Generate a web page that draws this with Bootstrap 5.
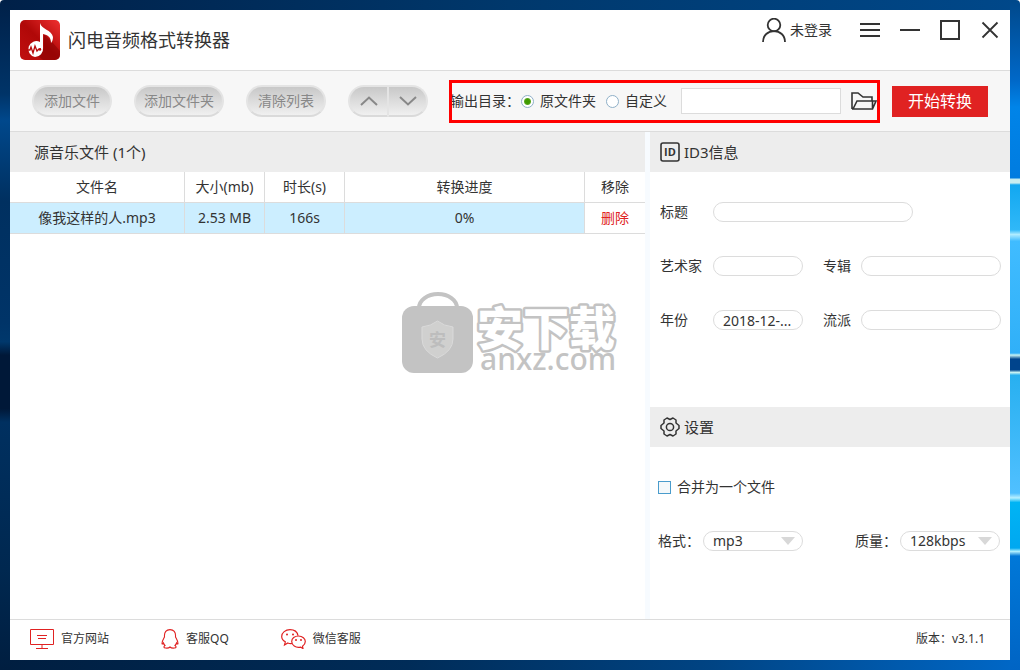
<!DOCTYPE html>
<html lang="zh-CN">
<head>
<meta charset="utf-8">
<meta name="viewport" content="width=device-width, initial-scale=1">
<title>闪电音频格式转换器</title>
<link href="https://cdn.jsdelivr.net/npm/bootstrap@5.3.0/dist/css/bootstrap.min.css" rel="stylesheet">
<style>
  body { font: 14px/20px "Noto Sans", "Noto Sans CJK SC", sans-serif; color: #333; background: #fff; }
  .desktop {
    min-height: 100vh; padding: 10px; border-radius: 4px 4px 0 0;
    background:
      linear-gradient(#00488a 0, #0068c8 12%, #0084e8 16%, #007ce0 26.5%, #c8eef0 26.8%, #c8eef0 27.3%, #12a8f0 27.6%, #30b8f8 34.3%, #b0ecff 35%, #40bcff 36%, #30b0f8 52.7%, #c8f4f4 53%, #00448c 53.6%, #00448c 55.2%, #c8f4f4 55.6%, #28b0f0 56%, #50c0ff 73.6%, #b8f0ff 74.3%, #00b4f4 75%, #00a8f0 81.8%, #b0f0ff 82.3%, #0078d8 83%, #0064c4 100%) right / 10px 100% no-repeat,
      linear-gradient(#002048 0, #003468 14%, #00488c 18%, #003060 30%, #003468 48%, #00386c 51%, #001838 53%, #001838 61%, #003060 63%, #002850 85%, #001e40 100%) left / 10px 100% no-repeat,
      linear-gradient(90deg, #002048, #00386c 50%, #00488a) top / 100% 10px no-repeat,
      linear-gradient(90deg, #001e40, #002c58 40%, #004484 70%, #0068c8) bottom / 100% 10px no-repeat;
  }
  .app { background: #fff; min-height: calc(100vh - 20px); }
  .titlebar { height: 61px; padding: 10px; border-bottom: 1px solid #dcdcdc; }
  .app-name { font-size: 18px; line-height: 24px; margin: 0 0 0 8px; font-weight: 400; }
  .controls { height: 20px; gap: 20px; }
  .icon-btn { border: 0; padding: 0; background: none; color: #333; display: flex; align-items: center; flex: none; }
  svg { display: block; flex: none; }
  .toolbar { height: 61px; padding: 0 22px; background: #f7f7f7; border-bottom: 1px solid #dcdcdc; }
  .actions { gap: 22px; }
  .pill { height: 32px; border: 2px solid #e4e4e4; border-bottom-color: #dadada; border-radius: 16px; padding: 0; color: #888; background: linear-gradient(#c8c8c8, #f0f0f0); width: 80px; }
  .pill-wide { width: 90px; }
  .pill-half { width: 40px; display: flex; align-items: center; justify-content: center; }
  .pill-half:first-child { border-radius: 16px 0 0 16px; border-right-width: 1px; }
  .pill-half:last-child { border-radius: 0 16px 16px 0; border-left-width: 1px; }
  .output { height: 43px; margin: 0 12px 0 21px; outline: 3px solid #f00; outline-offset: -3px; padding: 0 3px 0 1px; min-width: 0; white-space: nowrap; }
  .output-name { width: 71px; }
  .dot { appearance: none; flex: none; width: 13px; height: 13px; margin: 0 6px 0 0; border: 1px solid #8fb0c8; border-radius: 50%; background: #fff; }
  .dot:checked { background: radial-gradient(circle, #3f9a00 0 2px, #58a820 3px, #fff 4px); }
  .dot-next { margin-left: 10px; }
  .path-box { height: 26px; width: 0; flex: 1 1 0; min-width: 0; margin: 0 10px 0 14px; border: 1px solid #dcdcdc; background: #fff; }
  .start { flex: none; width: 96px; height: 31px; border: 0; padding: 0; background: #e02222; color: #fff; font-size: 16px; }
  .panel-head { height: 40px; background: #ededed; font-size: 15px; font-weight: 400; margin: 0; padding: 0 10px; gap: 4px; }
  .files .panel-head { padding-left: 24px; }
  .side { flex: 0 0 365px; border-left: 5px solid #f7fbff; }
  .songs { width: 100%; table-layout: fixed; text-align: center; border-collapse: separate; border-spacing: 0; }
  .songs th, .songs td { height: 31px; padding: 0; border: 1px solid #dcdcdc; border-width: 0 1px 1px 0; font-weight: 400; }
  .songs th:last-child, .songs td:last-child { border-right: 0; }
  .songs td { background: #cef; }
  .songs td:last-child { background: #fff; }
  .w-size { width: 80px; } .w-prog { width: 240px; } .w-del { width: 60px; }
  .del { color: #e02222; text-decoration: none; }
  .tags { display: grid; grid-template-columns: 53px 90px 58px 1fr; grid-auto-rows: 20px; row-gap: 34px; padding: 30px 9px 77px 10px; }
  .tags label:nth-of-type(n+2):nth-of-type(odd) { padding-left: 20px; }
  .field { height: 20px; min-width: 0; width: 100%; border: 1px solid #dcdcdc; border-radius: 10px; padding: 0 9px; background: #fff; color: #333; line-height: 18px; text-overflow: ellipsis; }
  .field-title { grid-column: 2 / 5; width: 200px; }
  .tick { appearance: none; width: 13px; height: 13px; margin: 0 6px 0 0; border: 1px solid #4a9ccc; background: #f4f8fa; }
  .settings { display: grid; gap: 34px; padding: 30px 10px 30px 8px; }
  .pickers label { width: 45px; }
  select.field { width: 100px; appearance: none; background: url("data:image/svg+xml,%3Csvg xmlns='http://www.w3.org/2000/svg' width='14' height='8'%3E%3Cpath d='M0 0h14L7 8z' fill='%23d8d8d8'/%3E%3C/svg%3E") right 7px center no-repeat #fff; }
  .statusbar { height: 41px; border-top: 1px solid #dcdcdc; padding: 0 25px 2px 20px; font-size: 12px; gap: 52px; }
  .statusbar a { color: #333; text-decoration: none; display: flex; align-items: center; gap: 7px; }
  .watermark { pointer-events: none; }
</style>
</head>
<body>
<div class="desktop">
<div class="app d-flex flex-column position-relative">
  <header class="titlebar d-flex align-items-center">
    <svg width="40" height="40" viewBox="0 0 40 40">
      <defs><linearGradient id="lg" x1="0" y1="1" x2="1" y2="0"><stop offset="0" stop-color="#c01010"/><stop offset=".5" stop-color="#b00808"/><stop offset="1" stop-color="#f03030"/></linearGradient></defs>
      <rect width="40" height="40" rx="5" fill="url(#lg)"/>
      <path d="M24 14l9 9 7 8v4a5 5 0 0 1-5 5H23l-5-4 6-8z" fill="#800000" opacity=".5"/>
      <path d="M20 3c1 6 12 7 13 14 0 3-1 5-2 6 0-6-3-8-8-9v14a8 8 0 0 1-8 9 8 8 0 1 1 5-15z" fill="#fff"/>
      <path d="M7 30h3l1-3 2 6 2-7 2 5 2-2h2" fill="none" stroke="#b80808" stroke-width="1.300"/><circle cx="20" cy="29.500" r="1.200" fill="#b80808"/>
    </svg>
    <h1 class="app-name">闪电音频格式转换器</h1>
    <div class="controls d-flex align-items-center align-self-start ms-auto">
      <button class="icon-btn me-2" type="button">
        <svg width="24" height="24" viewBox="0 0 24 24" fill="none" stroke="#333" stroke-width="1.800"><circle cx="12" cy="7" r="6.300"/><path d="M1 24C1 17 6 13.200 12 13.200S23 17 23 24"/></svg>
        <span class="ms-1">未登录</span>
      </button>
      <button class="icon-btn" type="button" aria-label="菜单"><svg width="20" height="20" stroke="#333" stroke-width="2"><path d="M0 4h20M0 10h20M0 16h20"/></svg></button>
      <button class="icon-btn" type="button" aria-label="最小化"><svg width="20" height="20" stroke="#333" stroke-width="2"><path d="M0 10h20"/></svg></button>
      <button class="icon-btn" type="button" aria-label="最大化"><svg width="20" height="20" fill="none" stroke="#333" stroke-width="2"><path d="M1 1h18v18H1z"/></svg></button>
      <button class="icon-btn" type="button" aria-label="关闭"><svg width="20" height="20" stroke="#333" stroke-width="1.800"><path d="M2.500 2.500l15 15M17.500 2.500l-15 15"/></svg></button>
    </div>
  </header>

  <div class="toolbar d-flex align-items-center">
    <div class="actions d-flex">
      <button class="pill" type="button">添加文件</button>
      <button class="pill pill-wide" type="button">添加文件夹</button>
      <button class="pill" type="button">清除列表</button>
      <div class="d-flex">
        <button class="pill pill-half" type="button" aria-label="上移"><svg width="18" height="10" fill="none" stroke="#888" stroke-width="2"><path d="M1 9l8-7.500L17 9"/></svg></button>
        <button class="pill pill-half" type="button" aria-label="下移"><svg width="18" height="10" fill="none" stroke="#888" stroke-width="2"><path d="M1 1l8 7.500L17 1"/></svg></button>
      </div>
    </div>
    <div class="output d-flex align-items-center flex-fill">
      <span class="output-name">输出目录：</span>
      <input class="dot" type="radio" name="dir" id="dirSrc" checked><label for="dirSrc">原文件夹</label>
      <input class="dot dot-next" type="radio" name="dir" id="dirOwn"><label for="dirOwn">自定义</label>
      <input class="path-box" type="text" aria-label="自定义目录">
      <button class="icon-btn" type="button" aria-label="浏览"><svg width="26" height="18" fill="none" stroke="#333" stroke-width="1.600"><path d="M1 17V1h6l5 4h9v4M1 17h20.500L25 9H6L2 17M21.500 9v7"/></svg></button>
    </div>
    <button class="start" type="button">开始转换</button>
  </div>

  <main class="d-flex flex-fill">
    <section class="files flex-fill">
      <h2 class="panel-head d-flex align-items-center">源音乐文件 (1个)</h2>
      <table class="songs">
        <colgroup><col><col class="w-size"><col class="w-size"><col class="w-prog"><col class="w-del"></colgroup>
        <thead><tr><th>文件名</th><th>大小(mb)</th><th>时长(s)</th><th>转换进度</th><th>移除</th></tr></thead>
        <tbody><tr><td>像我这样的人.mp3</td><td>2.53 MB</td><td>166s</td><td>0%</td><td><a class="del" href="#">删除</a></td></tr></tbody>
      </table>
    </section>
    <aside class="side">
      <h2 class="panel-head d-flex align-items-center">
        <svg width="20" height="20" viewBox="0 0 20 20"><rect x="1" y="1" width="18" height="18" rx="2" fill="none" stroke="#333" stroke-width="1.600"/><text x="10" y="14" text-anchor="middle" font-family="Open Sans" font-size="11" font-weight="700" fill="#333">ID</text></svg>
        ID3信息
      </h2>
      <div class="tags">
        <label for="tTitle">标题</label><input class="field field-title" id="tTitle" type="text">
        <label for="tArtist">艺术家</label><input class="field" id="tArtist" type="text">
        <label for="tAlbum">专辑</label><input class="field" id="tAlbum" type="text">
        <label for="tYear">年份</label><input class="field" id="tYear" type="text" value="2018-12-...">
        <label for="tGenre">流派</label><input class="field" id="tGenre" type="text">
      </div>
      <h2 class="panel-head d-flex align-items-center">
        <svg width="20" height="20" viewBox="0 0 20 20" fill="none" stroke="#333" stroke-width="1.500" stroke-linejoin="round"><circle cx="10" cy="10" r="3.600"/><path d="M7 1l3 1.500L13 1l3 2v3l3 2.500v3L16 14v3l-3 2-3-1.500L7 19l-3-2v-3l-3-2.500v-3L4 6V3z"/></svg>
        设置
      </h2>
      <div class="settings">
        <div class="d-flex align-items-center"><input class="tick" type="checkbox" id="merge"><label for="merge">合并为一个文件</label></div>
        <div class="pickers d-flex align-items-center justify-content-between">
          <div class="d-flex align-items-center"><label for="fmt">格式：</label><select class="field" id="fmt"><option>mp3</option></select></div>
          <div class="d-flex align-items-center"><label for="rate">质量：</label><select class="field" id="rate"><option>128kbps</option></select></div>
        </div>
      </div>
    </aside>
  </main>

  <footer class="statusbar d-flex align-items-center">
    <a href="#"><svg width="24" height="20" fill="none" stroke="#e02222" stroke-width="1"><path d="M.5.500h23v15H.5zM7 6.500h10M8 9.500h8M12 16v3M6 19.500h12" /></svg>官方网站</a>
    <a href="#"><svg width="18" height="20" fill="none" stroke="#e02222" stroke-width="1.100"><path d="M3.500 8C3 3 5.500.600 9 .600S15 3 14.500 8c1 2 2.500 4 2.500 6.500 0 1-1 .5-1.500-.500-.5 1.500-1 2-1.500 2.500 1.500 1 1.500 2.500-.5 2.500-2 .3-3.500 0-4.500-1-1 1-2.500 1.300-4.500 1-2 0-2-1.500-.5-2.500-.5-.5-1-1-1.500-2.500C2 15 1 15.500 1 14.500 1 12 2.500 10 3.500 8z"/></svg>客服QQ</a>
    <a href="#"><svg width="25" height="20" fill="none" stroke="#e02222" stroke-width="1.200"><path d="M11 14.500c-2 .3-3 0-4.200-.5L3.500 16l.8-3.200C2 11.500.700 9.800.700 7.500.700 3.500 4.500.700 9 .700c4 0 7.300 2.300 8 6"/><path d="M17.500 7c4 0 6.800 2.600 6.800 5.600 0 2-1 3.500-2.800 4.700l.5 2.300-2.500-1.500c-5 1-8.800-2-8.800-5.500S13.700 7 17.500 7z"/><g fill="#e02222" stroke="none"><circle cx="6" cy="5.500" r="1"/><circle cx="12" cy="5.500" r="1"/><circle cx="15" cy="11" r="1"/><circle cx="20" cy="11" r="1"/></g></svg>微信客服</a>
    <span class="ms-auto">版本：v3.1.1</span>
  </footer>

  <svg class="watermark position-absolute top-50 start-50 translate-middle" width="216" height="92" viewBox="0 -4 216 92" aria-hidden="true">
    <path d="M17 15a19 14 0 0 1 38 0" fill="none" stroke="#c3c3c3" stroke-width="4"/>
    <rect y="13" width="71" height="67" rx="12" fill="#c3c3c3"/>
    <path d="M20 34q9-1 15.500-6Q42 33 51 34v12q0 12-15.500 19Q20 58 20 46z" fill="#d0d0cf" stroke="#dadada"/>
    <text x="35.500" y="53" text-anchor="middle" font-family="Noto Sans CJK SC" font-weight="700" font-size="17" fill="#bdbdbd">安</text>
    <g font-family="Noto Sans CJK SC" font-weight="900" font-size="46" stroke-linejoin="round">
      <text x="75" y="52" fill="#fff" stroke="#c3c3c3" stroke-width="5" paint-order="stroke">安下载</text>
    </g>
    <text x="78" y="77" font-family="Noto Sans" font-weight="500" font-size="30" fill="#c3c3c3">anxz.com</text>
  </svg>
</div>
</div>
<script src="https://cdn.jsdelivr.net/npm/bootstrap@5.3.0/dist/js/bootstrap.bundle.min.js"></script>
</body>
</html>
